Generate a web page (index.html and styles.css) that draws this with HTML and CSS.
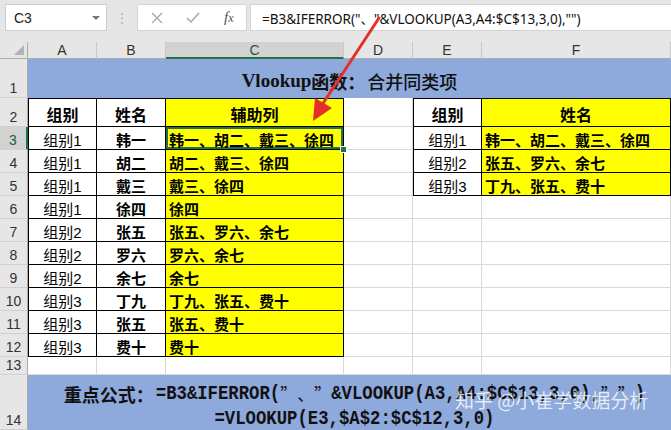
FILE: index.html
```html
<!DOCTYPE html>
<html lang="zh-CN">
<head>
<meta charset="utf-8">
<title>Vlookup函数：合并同类项</title>
<link rel="stylesheet" href="styles.css">
</head>
<body>
<div class="app">
  <div class="fbar">
    <div class="namebox"><span class="nb-text">C3</span><span class="dd"></span></div>
    <div class="sep">⋮</div>
    <div class="icons">
      <svg class="ic" width="14" height="14" viewBox="0 0 14 14"><path d="M2 2 L12 12 M12 2 L2 12" stroke="#a6a6a6" stroke-width="1.3" fill="none"/></svg>
      <svg class="ic" width="16" height="14" viewBox="0 0 16 14"><path d="M2 7 L6 11 L14 2" stroke="#a6a6a6" stroke-width="1.5" fill="none"/></svg>
      <span class="fx"><i>f</i><span class="fxx">x</span></span>
    </div>
    <div class="finput">=B3&amp;IFERROR("、"&amp;VLOOKUP(A3,A4:$C$13,3,0),"")</div>
  </div>

  <div class="sheet">
    <!-- header row -->
    <div class="corner"><span class="tri"></span></div>
    <div class="ch">A</div>
    <div class="ch">B</div>
    <div class="ch sel">C</div>
    <div class="ch">D</div>
    <div class="ch">E</div>
    <div class="ch">F</div>

    <!-- row 1 -->
    <div class="rh">1</div>
    <div class="title"><span class="lat">Vlookup</span><span class="cj">函数：</span><span class="cj2">合并同类项</span></div>

    <!-- row 2 -->
    <div class="rh">2</div>
    <div class="c t tl tt ctr hd">组别</div>
    <div class="c t tt ctr hd">姓名</div>
    <div class="c t tt ctr hd y">辅助列</div>
    <div class="c"></div>
    <div class="c t tl tt ctr hd">组别</div>
    <div class="c t tt ctr hd y">姓名</div>

    <!-- row 3 -->
    <div class="rh rsel">3</div>
    <div class="c t tl ctr g">组别1</div>
    <div class="c t ctr b">韩一</div>
    <div class="c t y b l active">韩一、胡二、戴三、徐四<span class="handle"></span></div>
    <div class="c"></div>
    <div class="c t tl ctr g">组别1</div>
    <div class="c t y b l">韩一、胡二、戴三、徐四</div>

    <!-- row 4 -->
    <div class="rh">4</div>
    <div class="c t tl ctr g">组别1</div>
    <div class="c t ctr b">胡二</div>
    <div class="c t y b l">胡二、戴三、徐四</div>
    <div class="c"></div>
    <div class="c t tl ctr g">组别2</div>
    <div class="c t y b l">张五、罗六、余七</div>

    <!-- row 5 -->
    <div class="rh">5</div>
    <div class="c t tl ctr g">组别1</div>
    <div class="c t ctr b">戴三</div>
    <div class="c t y b l">戴三、徐四</div>
    <div class="c"></div>
    <div class="c t tl ctr g">组别3</div>
    <div class="c t y b l">丁九、张五、费十</div>

    <!-- row 6 -->
    <div class="rh">6</div>
    <div class="c t tl ctr g">组别1</div>
    <div class="c t ctr b">徐四</div>
    <div class="c t y b l">徐四</div>
    <div class="c"></div>
    <div class="c"></div>
    <div class="c"></div>

    <!-- row 7 -->
    <div class="rh">7</div>
    <div class="c t tl ctr g">组别2</div>
    <div class="c t ctr b">张五</div>
    <div class="c t y b l">张五、罗六、余七</div>
    <div class="c"></div>
    <div class="c"></div>
    <div class="c"></div>

    <!-- row 8 -->
    <div class="rh">8</div>
    <div class="c t tl ctr g">组别2</div>
    <div class="c t ctr b">罗六</div>
    <div class="c t y b l">罗六、余七</div>
    <div class="c"></div>
    <div class="c"></div>
    <div class="c"></div>

    <!-- row 9 -->
    <div class="rh">9</div>
    <div class="c t tl ctr g">组别2</div>
    <div class="c t ctr b">余七</div>
    <div class="c t y b l">余七</div>
    <div class="c"></div>
    <div class="c"></div>
    <div class="c"></div>

    <!-- row 10 -->
    <div class="rh">10</div>
    <div class="c t tl ctr g">组别3</div>
    <div class="c t ctr b">丁九</div>
    <div class="c t y b l">丁九、张五、费十</div>
    <div class="c"></div>
    <div class="c"></div>
    <div class="c"></div>

    <!-- row 11 -->
    <div class="rh">11</div>
    <div class="c t tl ctr g">组别3</div>
    <div class="c t ctr b">张五</div>
    <div class="c t y b l">张五、费十</div>
    <div class="c"></div>
    <div class="c"></div>
    <div class="c"></div>

    <!-- row 12 -->
    <div class="rh">12</div>
    <div class="c t tl ctr g">组别3</div>
    <div class="c t ctr b">费十</div>
    <div class="c t y b l">费十</div>
    <div class="c"></div>
    <div class="c"></div>
    <div class="c"></div>

    <!-- row 13 -->
    <div class="rh">13</div>
    <div class="c"></div>
    <div class="c"></div>
    <div class="c"></div>
    <div class="c"></div>
    <div class="c"></div>
    <div class="c"></div>

    <!-- row 14 -->
    <div class="rh">14</div>
    <div class="note">
      <div class="nl"><span class="nk">重点公式：</span><span class="mo">=B3&amp;IFERROR(</span><span class="q">”</span><span class="q">、</span><span class="q">”</span><span class="mo">&amp;VLOOKUP(A3,A4:$C$13,3,0),</span><span class="q">”</span><span class="q">”</span><span class="mo">)</span></div>
      <div class="nl"><span class="mo">=VLOOKUP(E3,$A$2:$C$12,3,0)</span></div>
    </div>
  </div>

  <svg class="arrow" width="671" height="430" viewBox="0 0 671 430">
    <line x1="379" y1="18" x2="322" y2="105" stroke="#e5302a" stroke-width="3" stroke-linecap="round"/>
    <polygon points="313,121 315,98 332,108" fill="#e5302a"/>
  </svg>
  <div class="wm">知乎 @小崔学数据分析</div>
</div>
</body>
</html>
```

FILE: styles.css
```css
html, body {
  margin: 0;
  padding: 0;
}
body {
  width: 671px;
  height: 430px;
  overflow: hidden;
  background: #e6e6e6;
  font-family: "Liberation Sans", "Noto Sans CJK SC", sans-serif;
}
.app {
  position: relative;
  width: 671px;
  height: 430px;
  overflow: hidden;
}

/* formula bar */
.fbar {
  height: 42px;
  box-sizing: border-box;
  display: flex;
  align-items: flex-start;
  padding: 4px 0 0 5px;
  background: #e6e6e6;
}
.namebox {
  width: 102px;
  height: 27px;
  box-sizing: border-box;
  background: #fff;
  border: 1px solid #cfcfcf;
  display: flex;
  align-items: center;
  justify-content: space-between;
  padding: 0 6px 0 8px;
  font-size: 14px;
  color: #222;
}
.dd {
  width: 0;
  height: 0;
  border-left: 4px solid transparent;
  border-right: 4px solid transparent;
  border-top: 4px solid #777;
}
.sep {
  width: 30px;
  height: 27px;
  display: flex;
  align-items: center;
  justify-content: center;
  color: #b5b5b5;
  font-size: 14px;
}
.icons {
  width: 110px;
  height: 27px;
  box-sizing: border-box;
  background: #fff;
  border: 1px solid #d4d4d4;
  display: flex;
  align-items: center;
  padding: 0 10px 0 12px;
  gap: 21px;
}
.fx {
  font-family: "Liberation Serif", serif;
  font-size: 15px;
  color: #555;
  margin-left: 2px;
}
.fx i {
  font-style: italic;
}
.fxx {
  font-size: 12px;
  font-style: italic;
}
.finput {
  flex: 1;
  height: 27px;
  margin-left: 3px;
  box-sizing: border-box;
  background: #fff;
  border: 1px solid #d4d4d4;
  border-right: none;
  display: flex;
  align-items: center;
  padding-left: 11px;
  font-family: "Noto Sans", "Noto Sans CJK SC", sans-serif;
  font-size: 13.5px;
  color: #111;
  white-space: nowrap;
}

/* sheet grid */
.sheet {
  display: grid;
  grid-template-columns: 28px 69px 69px 178px 69px 69px 189px;
  grid-template-rows: 17px 39px 29px repeat(10, 23px) 18px 55px;
  background: #fff;
}
.corner {
  background: #e6e6e6;
  border-right: 1px solid #ababab;
  border-bottom: 1px solid #ababab;
  box-sizing: border-box;
  position: relative;
}
.tri {
  position: absolute;
  right: 3px;
  bottom: 3px;
  width: 0;
  height: 0;
  border-left: 10px solid transparent;
  border-bottom: 10px solid #b4b4b4;
}
.ch {
  background: #e6e6e6;
  border-right: 1px solid #c8c8c8;
  border-bottom: 1px solid #ababab;
  box-sizing: border-box;
  display: flex;
  align-items: center;
  justify-content: center;
  font-size: 14px;
  color: #333;
}
.ch.sel {
  background: #d2d2d2;
  border-bottom: 2px solid #217346;
  color: #1f5c37;
}
.rh {
  background: #e6e6e6;
  border-right: 1px solid #ababab;
  border-bottom: 1px solid #d0d0d0;
  box-sizing: border-box;
  display: flex;
  align-items: flex-end;
  justify-content: center;
  font-size: 14px;
  color: #333;
  line-height: 16px;
  padding-bottom: 1px;
}
.rh.rsel {
  background: #d2d2d2;
  border-right: 2px solid #217346;
  color: #1f5c37;
}

.title {
  grid-column: 2 / -1;
  background: #8ea9db;
  display: flex;
  align-items: center;
  justify-content: center;
  padding-top: 4px;
  box-sizing: border-box;
  color: #111;
  font-size: 18px;
}
.title .lat {
  font-family: "Liberation Serif", serif;
  font-weight: bold;
  font-size: 19px;
}
.title .cj {
  font-family: "Noto Sans CJK SC", sans-serif;
  font-weight: bold;
}
.title .cj2 {
  font-family: "Noto Sans CJK SC", sans-serif;
  font-weight: 500;
  margin-left: 2px;
}

.c {
  background: #fff;
  border-right: 1px solid #d9d9d9;
  border-bottom: 1px solid #d9d9d9;
  box-sizing: border-box;
  display: flex;
  align-items: center;
  white-space: nowrap;
  overflow: visible;
  position: relative;
  font-size: 15px;
  color: #000;
  padding-top: 2px;
}
.t {
  border-right-color: #000;
  border-bottom-color: #000;
}
.tl {
  border-left: 1px solid #000;
}
.tt {
  border-top: 1px solid #000;
}
.y {
  background: #ffff00;
}
.ctr {
  justify-content: center;
}
.b {
  font-weight: bold;
  font-family: "Noto Sans CJK SC", sans-serif;
}
.g {
  font-family: "Liberation Sans", "Noto Sans CJK SC", sans-serif;
  font-size: 15px;
}
.hd {
  font-weight: bold;
  font-size: 16px;
  font-family: "Noto Sans CJK SC", sans-serif;
}
.l {
  padding-left: 3px;
}
.active {
  box-shadow: inset 0 0 0 2px #217346;
}
.handle {
  position: absolute;
  right: -4px;
  bottom: -4px;
  width: 5px;
  height: 5px;
  background: #217346;
  border: 1px solid #fff;
  z-index: 2;
}

.note {
  grid-column: 2 / -1;
  background: #8ea9db;
  display: flex;
  flex-direction: column;
  align-items: center;
  padding-top: 6px;
  padding-left: 10px;
  box-sizing: border-box;
  color: #111;
}
.nl {
  height: 25px;
  display: flex;
  align-items: center;
  white-space: nowrap;
}
.nk {
  font-family: "Noto Sans CJK SC", sans-serif;
  font-weight: bold;
  font-size: 18px;
  margin-right: 2px;
}
.mo {
  font-family: "Liberation Mono", monospace;
  font-size: 17.3px;
  font-weight: bold;
  transform: scaleY(1.12);
}
.q {
  display: inline-block;
  width: 17px;
  text-align: center;
  font-family: "Noto Sans CJK SC", sans-serif;
  font-size: 17px;
}

.arrow {
  position: absolute;
  left: 0;
  top: 0;
  pointer-events: none;
}
.wm {
  position: absolute;
  left: 455px;
  top: 386px;
  font-family: "Noto Sans CJK SC", sans-serif;
  font-size: 19px;
  color: rgba(255, 255, 255, 0.78);
  white-space: nowrap;
}
```
